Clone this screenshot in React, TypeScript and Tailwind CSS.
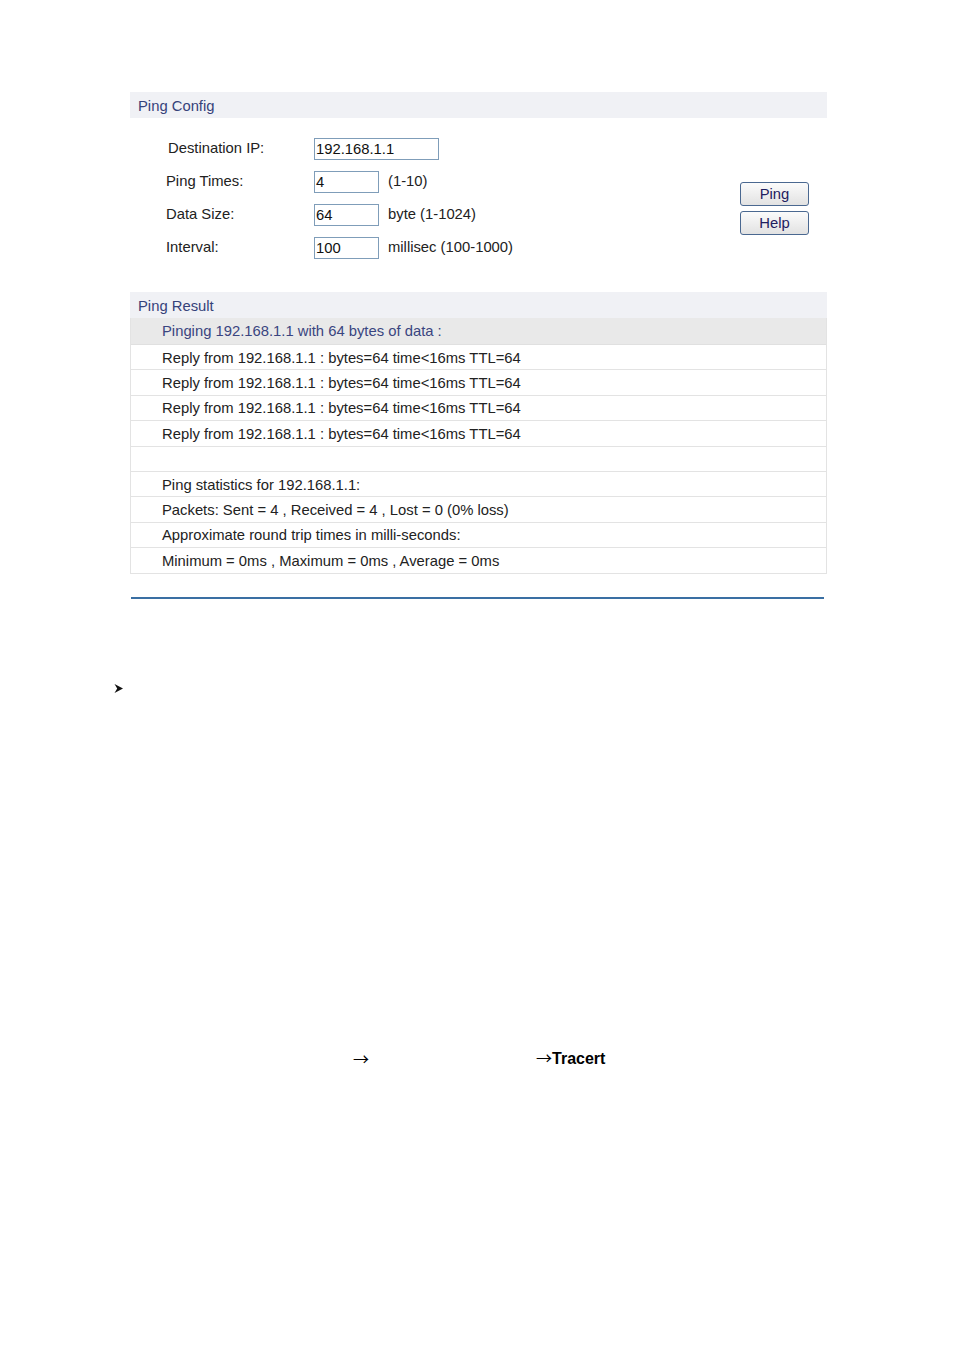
import React from "react";

const font = { fontFamily: '"Liberation Sans", Arial, sans-serif' };
const cjk = { fontFamily: '"Noto Sans CJK SC", "Liberation Sans", sans-serif' };

function Field({ label, value, w, hint, labelClass = "" }: { label: string; value: string; w: string; hint?: string; labelClass?: string }) {
  return (
    <div className="flex h-[33px] items-center">
      <div className={`w-[148px] text-[14.8px] text-[#222] ${labelClass}`}>{label}</div>
      <div className={`${w} h-[22px] border border-[#7f9db9] bg-white text-[14.8px] leading-[21px] text-[#111] pl-[1px]`}>{value}</div>
      {hint && <div className="ml-[9px] text-[14.8px] text-[#222]">{hint}</div>}
    </div>
  );
}

function Btn({ children }: { children: React.ReactNode }) {
  return (
    <div className="flex h-[24px] w-[69px] items-center justify-center rounded-[3px] border border-[#4a6890] bg-gradient-to-b from-[#fbfbfb] to-[#e2e2e2] pt-[1px] text-[14.8px] text-[#1e2060]">
      {children}
    </div>
  );
}

const replies = Array.from({ length: 4 }, () => "Reply from 192.168.1.1 : bytes=64 time<16ms TTL=64");

export default function App() {
  const rows = [
    ...replies,
    "",
    "Ping statistics for 192.168.1.1:",
    "Packets: Sent = 4 , Received = 4 , Lost = 0 (0% loss)",
    "Approximate round trip times in milli-seconds:",
    "Minimum = 0ms , Maximum = 0ms , Average = 0ms",
  ];
  return (
    <div className="min-h-[1350px] w-[954px] bg-white" style={font}>
      <div className="ml-[130px] w-[697px] pt-[92px]">
        <div className="flex h-[26px] items-center bg-[#f0f1f5] pl-[8px] pt-[2px] text-[14.8px] text-[#36427a]">Ping Config</div>
        <div className="flex justify-between">
          <div className="pl-[36px] pt-[14px]">
            <Field label="Destination IP:" value="192.168.1.1" w="w-[125px]" labelClass="pl-[2px]" />
            <Field label="Ping Times:" value="4" w="w-[65px]" hint="(1-10)" />
            <Field label="Data Size:" value="64" w="w-[65px]" hint="byte (1-1024)" />
            <Field label="Interval:" value="100" w="w-[65px]" hint="millisec (100-1000)" />
          </div>
          <div className="flex flex-col gap-[5px] pr-[18px] pt-[64px]">
            <Btn>Ping</Btn>
            <Btn>Help</Btn>
          </div>
        </div>
        <div className="mt-[28px] flex h-[26px] items-center bg-[#f0f1f5] pl-[8px] pt-[2px] text-[14.8px] text-[#36427a]">Ping Result</div>
        <div className="w-[697px] border-x border-[#e3e3e3]">
          <div className="flex h-[27px] items-center border-b border-[#e0e0e0] bg-[#e9e9e9] pl-[31px] pt-[1px] text-[14.8px] text-[#3a4580]">
            Pinging 192.168.1.1 with 64 bytes of data :
          </div>
          {rows.map((r, i) => (
            <div key={i} className="flex h-[25.4px] items-center border-b border-[#e3e3e3] pl-[31px] pt-[1px] text-[14.8px] text-[#222]">
              {r}
            </div>
          ))}
        </div>
        <div className="ml-[1px] mt-[23px] h-[2px] w-[693px] bg-[#3a6fa3]" />
      </div>
      <div className="ml-[113px] mt-[84px] h-[11px] w-[11px]">
        <svg width="11" height="11" viewBox="0 0 11 11">
          <path d="M1.5 1 L10 5.5 L1.5 10 L4.2 5.5 Z" fill="#111" />
        </svg>
      </div>
      <div className="ml-[353px] mt-[351px] flex items-center text-[16px] leading-[24px] text-black">
        <span style={cjk}>→</span>
        <span className="ml-[167px] font-bold"><span style={cjk} className="font-normal">→</span>Tracert</span>
      </div>
    </div>
  );
}
